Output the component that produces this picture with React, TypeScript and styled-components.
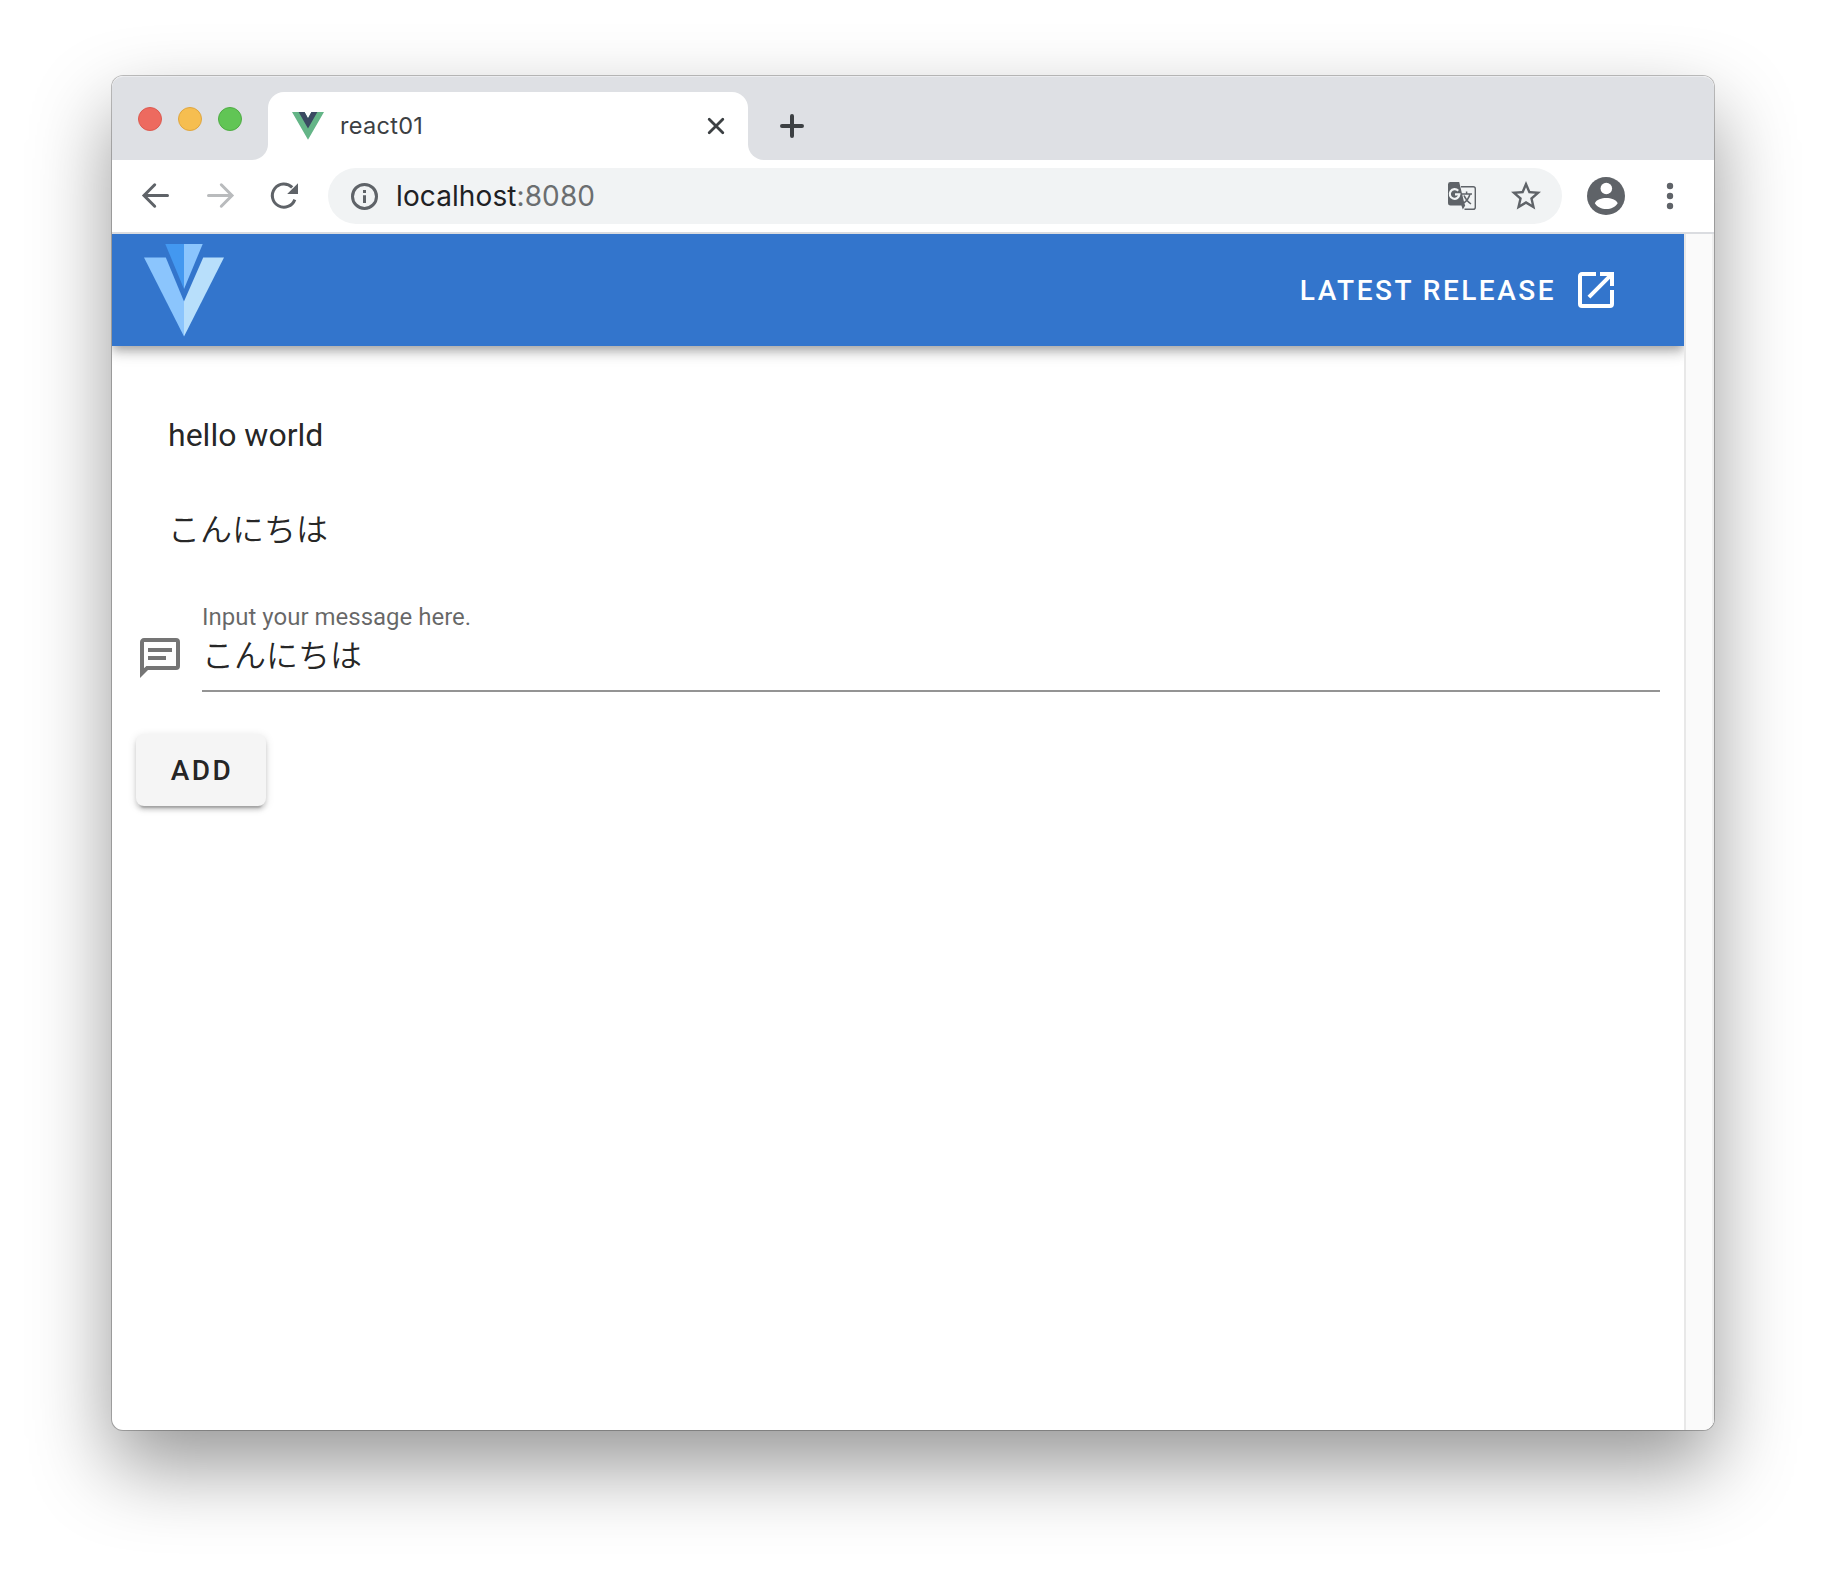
import React, { useState } from 'react';
import styled, { createGlobalStyle } from 'styled-components';

const GlobalStyle = createGlobalStyle`
  * {
    box-sizing: border-box;
  }

  body {
    margin: 0;
    background: #fff;
    font-family: Roboto, 'Noto Sans CJK JP', sans-serif;
    color: rgba(0, 0, 0, 0.87);
  }
`;

const Desktop = styled.div`
  width: 1826px;
  height: 1578px;
  padding: 76px 112px 0;
  overflow: hidden;
`;

const BrowserWindow = styled.div`
  display: flex;
  flex-direction: column;
  width: 1602px;
  height: 1354px;
  border-radius: 11px;
  overflow: hidden;
  background: #fff;
  box-shadow:
    0 0 0 1px rgba(0, 0, 0, 0.24),
    0 36px 80px rgba(0, 0, 0, 0.41);
`;

/* Tab strip */

const TabStrip = styled.div`
  display: flex;
  flex: none;
  height: 84px;
`;

const TrafficLights = styled.div`
  display: flex;
  align-items: center;
  gap: 16px;
  width: 156px;
  padding: 0 0 0 26px;
  background: #dee0e4;
  border-top: 1px solid #ebecef;
  border-radius: 11px 0 16px 0;
`;

const Light = styled.span<{ $color: string; $ring: string }>`
  width: 24px;
  height: 24px;
  border-radius: 50%;
  background: ${props => props.$color};
  border: 1px solid ${props => props.$ring};
`;

const TabSlot = styled.div`
  width: 480px;
  padding-top: 15px;
  background: linear-gradient(#dee0e4 50%, #fff 50%);
  border-top: 1px solid #ebecef;
`;

const Tab = styled.div`
  display: flex;
  align-items: center;
  height: 68px;
  padding: 0 23px 0 24px;
  background: #fff;
  border-radius: 16px 16px 0 0;
`;

const TabTitle = styled.span`
  flex: 1;
  margin-left: 16px;
  font-family: Inter, sans-serif;
  font-size: 23.5px;
  line-height: 28px;
  letter-spacing: 0.3px;
  color: #3c4043;
`;

const TabRest = styled.div`
  display: flex;
  flex: 1;
  align-items: center;
  padding: 15px 0 0 30px;
  background: #dee0e4;
  border-top: 1px solid #ebecef;
  border-radius: 0 11px 0 16px;
`;

/* Toolbar */

const Toolbar = styled.div`
  display: flex;
  flex: none;
  align-items: center;
  height: 74px;
  padding-left: 28px;
  background: #fff;
  border-bottom: 2px solid #dadce0;
`;

const NavButtons = styled.div`
  display: flex;
  gap: 32px;
  width: 188px;
`;

const AddressBar = styled.div`
  display: flex;
  align-items: center;
  width: 1234px;
  height: 56px;
  padding: 0 18px 0 20px;
  background: #f1f3f4;
  border-radius: 28px;
`;

const Url = styled.span`
  flex: 1;
  margin-left: 16px;
  font-family: Inter, sans-serif;
  font-size: 28px;
  line-height: 34px;
  letter-spacing: 0.1px;
  color: #202124;
`;

const Port = styled.span`
  color: #6b6e70;
`;

const AddressActions = styled.div`
  display: flex;
  align-items: center;
  gap: 30px;
`;

const BrowserActions = styled.div`
  display: flex;
  align-items: center;
  gap: 40px;
  margin-left: 24px;
`;

/* Page */

const Viewport = styled.div`
  display: flex;
  flex: 1;
  min-height: 0;
`;

const Page = styled.div`
  flex: 1;
  min-width: 0;
`;

const ScrollTrack = styled.div`
  width: 30px;
  background: #fafafa;
  border-left: 2px solid #e8e8e8;
  border-right: 2px solid #eee;
`;

const AppBar = styled.header`
  display: flex;
  align-items: center;
  justify-content: space-between;
  height: 112px;
  padding: 0 64px 0 32px;
  background: #3375cc;
  box-shadow:
    0 4px 8px -2px rgba(0, 0, 0, 0.2),
    0 8px 10px 0 rgba(0, 0, 0, 0.14),
    0 2px 20px 0 rgba(0, 0, 0, 0.12);
  clip-path: inset(0 0 -40px 0);
`;

const ReleaseLink = styled.a`
  display: flex;
  align-items: center;
  gap: 16px;
  font-size: 28px;
  font-weight: 500;
  letter-spacing: 0.0892857143em;
  text-transform: uppercase;
  text-decoration: none;
  color: #fff;
`;

const Main = styled.main`
  padding: 65px 24px;
`;

const MessageItem = styled.p`
  margin: 0 0 47px;
  padding-left: 32px;
  font-size: 32px;
  font-weight: ${props => (props.lang === 'ja' ? 350 : 400)};
  line-height: 48px;
`;

const FieldRow = styled.div`
  display: flex;
  align-items: flex-end;
  gap: 18px;
  height: 91px;
`;

const FieldIcon = styled.span`
  display: flex;
  margin-bottom: 10px;
`;

const Field = styled.div`
  display: flex;
  flex: 1;
  flex-direction: column;
  border-bottom: 2px solid #949494;
`;

const FieldLabel = styled.label`
  font-size: 24px;
  line-height: 28px;
  color: rgba(0, 0, 0, 0.6);
`;

const FieldInput = styled.input`
  width: 100%;
  height: 48px;
  margin: -2px 0 13px;
  padding: 0;
  border: 0;
  outline: none;
  background: transparent;
  font-family: inherit;
  font-size: 32px;
  font-weight: 350;
  color: rgba(0, 0, 0, 0.87);
`;

const AddButton = styled.button`
  width: 130px;
  height: 72px;
  margin-top: 42px;
  padding: 0 0 0 2px;
  border: 0;
  border-radius: 8px;
  background: #f5f5f5;
  box-shadow:
    0 6px 2px -4px rgba(0, 0, 0, 0.2),
    0 4px 4px 0 rgba(0, 0, 0, 0.14),
    0 2px 10px 0 rgba(0, 0, 0, 0.12);
  font-family: inherit;
  font-size: 28px;
  font-weight: 500;
  letter-spacing: 0.0892857143em;
  text-transform: uppercase;
  color: rgba(0, 0, 0, 0.87);
`;

/* Icons */

const VueIcon = () => (
  <svg width="32" height="28" viewBox="0 0 32 28">
    <path d="M0 0H12.6L16 6.2L19.4 0H32L16 27.8Z" fill="#64b587" />
    <path d="M6.6 0H12.6L16 6.2L19.4 0H25.4L16 16.6Z" fill="#3b4a62" />
  </svg>
);

const CloseIcon = () => (
  <svg width="18" height="18" viewBox="0 0 18 18" stroke="#3c4043" strokeWidth="2.8" strokeLinecap="round">
    <path d="M2.2 2.2L15.8 15.8M15.8 2.2L2.2 15.8" />
  </svg>
);

const PlusIcon = () => (
  <svg width="28" height="28" viewBox="0 0 28 28" stroke="#3c4043" strokeWidth="4" strokeLinecap="round">
    <path d="M14 4V24M4 14H24" />
  </svg>
);

const ArrowIcon = ({ forward = false }: { forward?: boolean }) => (
  <svg
    width="32"
    height="32"
    viewBox="0 0 32 32"
    fill="none"
    stroke={forward ? '#b9bbbd' : '#5f6368'}
    strokeWidth="3"
    strokeLinecap="round"
  >
    <path d={forward ? 'M4.5 15.5H27.5M17.3 4.8L28 15.5L17.3 26.2' : 'M27.5 15.5H4.5M14.7 4.8L4 15.5L14.7 26.2'} />
  </svg>
);

const ReloadIcon = () => (
  <svg width="32" height="32" viewBox="0 0 32 32">
    <path d="M24.2 7.4A11.6 11.6 0 1 0 26.8 19.6" fill="none" stroke="#5f6368" strokeWidth="3" />
    <path d="M30 3.2V14H19.2Z" fill="#5f6368" />
  </svg>
);

const InfoIcon = () => (
  <svg width="32" height="32" viewBox="0 0 32 32">
    <circle cx="16.5" cy="16.4" r="12" fill="none" stroke="#5f6368" strokeWidth="3" />
    <path d="M15 10H18V13H15ZM15 15.2H18V23H15Z" fill="#5f6368" />
  </svg>
);

const TranslateIcon = () => (
  <svg width="32" height="32" viewBox="0 0 32 32">
    <path d="M15 6.7H27.2Q29.3 6.7 29.3 8.8V27.2Q29.3 29.3 27.2 29.3H18.5" fill="none" stroke="#5f6368" strokeWidth="1.4" />
    <path d="M4.4 2H13.2L18.4 23.4L19.2 25.4L16.8 29.4L15.4 25.6H4.4Q2 25.6 2 23.2V4.4Q2 2 4.4 2Z" fill="#5f6368" />
    <path d="M12.2 10.8A4.8 4.8 0 1 0 13.4 14.3H9" fill="none" stroke="#f1f3f4" strokeWidth="2.2" />
    <path d="M16 14H26M20.6 11.6V14M24 14Q22.5 20 17 23.6M18 15.5Q20 20.5 25 24" fill="none" stroke="#5f6368" strokeWidth="1.5" />
  </svg>
);

const StarIcon = () => (
  <svg width="36" height="36" viewBox="0 0 24 24" fill="#5f6368">
    <path d="M22 9.24l-7.19-.62L12 2 9.19 8.63 2 9.24l5.46 4.73L5.82 21 12 17.27 18.18 21l-1.63-7.03L22 9.24zM12 15.4l-3.76 2.27 1-4.28-3.32-2.88 4.38-.38L12 6.1l1.71 4.04 4.38.38-3.32 2.88 1 4.28L12 15.4z" />
  </svg>
);

const AccountIcon = () => (
  <svg width="40" height="40" viewBox="0 0 40 40">
    <circle cx="20" cy="20" r="19" fill="#5f6368" />
    <circle cx="20.3" cy="12.5" r="5.8" fill="#fff" />
    <path d="M8.8 27.2C10.4 23.6 15.6 22 20.3 22S30.1 23.6 31.7 27.2C29.4 30.9 25.1 33 20.3 33S11.1 30.9 8.8 27.2Z" fill="#fff" />
  </svg>
);

const MenuIcon = () => (
  <svg width="8" height="28" viewBox="0 0 8 28" fill="#5f6368">
    <circle cx="4" cy="4" r="3.2" />
    <circle cx="4" cy="14" r="3.2" />
    <circle cx="4" cy="24" r="3.2" />
  </svg>
);

const VuetifyLogo = () => (
  <svg width="80" height="93" viewBox="0 0 80 93">
    <path d="M21.3 0H40V45Z" fill="#4398f0" />
    <path d="M40 0H58.7L40 45Z" fill="#8bc5fd" />
    <path d="M0 13.4H21.8L40 57.4V92.6Z" fill="#8bc5fd" />
    <path d="M80 13.4H59.2L40 57.4V92.6Z" fill="#b8dffb" />
  </svg>
);

const OpenInNewIcon = () => (
  <svg width="48" height="48" viewBox="0 0 24 24" fill="#fff">
    <path d="M14,3V5H17.59L7.76,14.83L9.17,16.24L19,6.41V10H21V3M19,19H5V5H12V3H5C3.89,3 3,3.9 3,5V19A2,2 0 0,0 5,21H19A2,2 0 0,0 21,19V12H19V19Z" />
  </svg>
);

const MessageIcon = () => (
  <svg width="48" height="48" viewBox="0 0 24 24" fill="#757575">
    <path d="M20,2A2,2 0 0,1 22,4V16A2,2 0 0,1 20,18H6L2,22V4C2,2.89 2.9,2 4,2H20M4,4V17.17L5.17,16H20V4H4M6,7H18V9H6V7M6,11H15V13H6V11Z" />
  </svg>
);

const App: React.FC = () => {
  const [messages, setMessages] = useState(['hello world', 'こんにちは']);
  const [text, setText] = useState('こんにちは');

  const handleAdd = () => {
    if (text) {
      setMessages([...messages, text]);
    }
  };

  return (
    <Desktop>
      <GlobalStyle />
      <BrowserWindow>
        <TabStrip>
          <TrafficLights>
            <Light $color="#ed6a5f" $ring="#dc5a50" />
            <Light $color="#f6be50" $ring="#dfa63f" />
            <Light $color="#61c555" $ring="#4fac44" />
          </TrafficLights>
          <TabSlot>
            <Tab>
              <VueIcon />
              <TabTitle>react01</TabTitle>
              <CloseIcon />
            </Tab>
          </TabSlot>
          <TabRest>
            <PlusIcon />
          </TabRest>
        </TabStrip>

        <Toolbar>
          <NavButtons>
            <ArrowIcon />
            <ArrowIcon forward />
            <ReloadIcon />
          </NavButtons>
          <AddressBar>
            <InfoIcon />
            <Url>
              localhost<Port>:8080</Port>
            </Url>
            <AddressActions>
              <TranslateIcon />
              <StarIcon />
            </AddressActions>
          </AddressBar>
          <BrowserActions>
            <AccountIcon />
            <MenuIcon />
          </BrowserActions>
        </Toolbar>

        <Viewport>
          <Page>
            <AppBar>
              <VuetifyLogo />
              <ReleaseLink href="#">
                <span>Latest Release</span>
                <OpenInNewIcon />
              </ReleaseLink>
            </AppBar>
            <Main>
              {messages.map((message, index) => (
                <MessageItem key={index} lang={/^[a-z ]+$/i.test(message) ? 'en' : 'ja'}>
                  {message}
                </MessageItem>
              ))}
              <FieldRow>
                <FieldIcon>
                  <MessageIcon />
                </FieldIcon>
                <Field>
                  <FieldLabel htmlFor="message">Input your message here.</FieldLabel>
                  <FieldInput id="message" value={text} onChange={e => setText(e.target.value)} />
                </Field>
              </FieldRow>
              <AddButton type="button" onClick={handleAdd}>
                Add
              </AddButton>
            </Main>
          </Page>
          <ScrollTrack />
        </Viewport>
      </BrowserWindow>
    </Desktop>
  );
};

export default App;
